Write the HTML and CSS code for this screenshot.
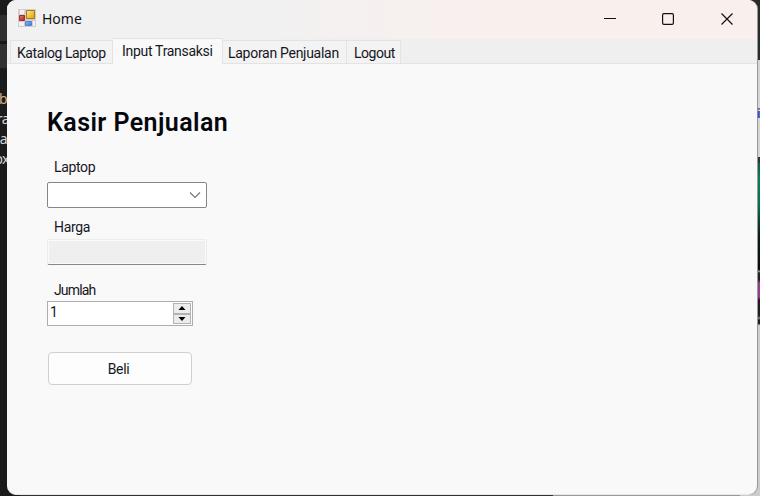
FILE: index.html
```
<!DOCTYPE html>
<html lang="id">
<head>
<meta charset="utf-8">
<title>Home</title>
<link rel="stylesheet" href="styles.css">
</head>
<body>
<div class="desktop">
  <div class="behind-left"><span>b</span><span>ra</span><span>a</span><span>ox</span></div>
  <main class="window">
    <header class="titlebar">
      <svg class="app-icon" width="18" height="18" viewBox="0 0 18 18">
        <defs>
          <linearGradient id="gold" x2="1" y2="1"><stop stop-color="#ffec8a"/><stop offset="1" stop-color="#dd9e00"/></linearGradient>
          <linearGradient id="red" x2="1" y2="1"><stop stop-color="#e98072"/><stop offset="1" stop-color="#ad1b18"/></linearGradient>
          <linearGradient id="blue" x2="1" y2="1"><stop stop-color="#8ab7ff"/><stop offset="1" stop-color="#3674dc"/></linearGradient>
        </defs>
        <path d="M0 0h18v18H0z" fill="#cfcfcf"/>
        <path d="M2 1h4v4H2zM1 13h5v4H1zM15 12h2v5h-2z" fill="#f1f1f1"/>
        <path d="M8.500 1.500h8v8h-8z" fill="url(#gold)" stroke="#a67c19"/>
        <path d="M1.500 6.500h5v5h-5z" fill="url(#red)" stroke="#a52d29"/>
        <path d="M7.500 12.500h6v4h-6z" fill="url(#blue)" stroke="#5583ca"/>
      </svg>
      <h1 class="title">Home</h1>
      <svg class="controls" width="131" height="14" viewBox="0 0 131 14" fill="none" stroke="#111" stroke-width="1.2">
        <path d="M0 6.500h12" stroke-width="1"/>
        <rect x="58.600" y="1.600" width="10.800" height="10.800" rx="1.300"/>
        <path d="M117.500 1.500l11 11M128.500 1.500l-11 11"/>
      </svg>
    </header>
    <nav class="tabs">
      <a class="tab katalog"><span>Katalog Laptop</span></a>
      <a class="tab active"><span>Input Transaksi</span></a>
      <a class="tab laporan"><span>Laporan Penjualan</span></a>
      <a class="tab logout"><span>Logout</span></a>
    </nav>
    <section class="page">
      <h2 class="heading">Kasir Penjualan</h2>
      <div class="label laptop">Laptop</div>
      <div class="combo">
        <svg width="12" height="8" viewBox="0 0 12 8" fill="none" stroke="#777" stroke-width="1.200"><path d="M1 1.500l5 5 5-5"/></svg>
      </div>
      <div class="label harga">Harga</div>
      <div class="readonly"></div>
      <div class="label jumlah">Jumlah</div>
      <div class="number">
        <span class="value">1</span>
        <div class="spinner">
          <div class="step"><svg width="8" height="4" viewBox="0 0 8 4"><path d="M4 0l3.500 4h-7z"/></svg></div>
          <div class="step"><svg width="8" height="4" viewBox="0 0 8 4"><path d="M4 4l3.500-4h-7z"/></svg></div>
        </div>
      </div>
      <button class="buy"><span>Beli</span></button>
    </section>
  </main>
  <div class="behind-right"><span>i</span></div>
</div>
</body>
</html>
```
FILE: styles.css
```
* { box-sizing: border-box; }
body { margin: 0; font-family: Roboto, "Liberation Sans", sans-serif; color: #16161f; }
.desktop {
  display: grid;
  grid-template-columns: 7px 750px 3px;
  width: 760px;
  height: 496px;
  overflow: hidden;
  background:
    linear-gradient(#1b1b1b 0 15px, #303030 15px 41px, #191919 41px 44px, #303030 44px 68px, #1b1b1b 68px) 0 0 / 20px 496px no-repeat,
    linear-gradient(#282b2b 0 60px, #d6d6d6 60px 157px, #333 157px 163px, #056346 163px, #078057 180px, #087050 205px, #0b1d18 235px, #0b0d0d 270px, #aaa 271px, #222 273px 280px, #953d91 283px 297px, #25172a 300px, #202124 316px, #888 318px, #222 320px 324px, #ccc 325px) 740px 0 / 20px 496px no-repeat,
    linear-gradient(90deg, #343033 553px, #999 553px);
}
.behind-left {
  display: flex;
  flex-direction: column;
  align-items: flex-end;
  padding-top: 89px;
  overflow: hidden;
  font: 14px/20px "Noto Sans", sans-serif;
  letter-spacing: -0.5px;
  color: #d5d5d5;
}
.behind-left span:nth-child(even) { margin-right: -2px; }
.behind-left span:first-child { color: #d9ad86; }
.behind-right { padding-top: 105px; overflow: hidden; font: bold 13px/17px Roboto, sans-serif; color: #3849b5; }
.window {
  height: 495px;
  border-radius: 9px;
  overflow: hidden;
  background: #f9f9f9;
  border-bottom: 1px solid #e7e7e7;
  box-shadow: 1px 0 0 #999;
}
.titlebar {
  display: flex;
  align-items: center;
  height: 39px;
  padding: 0 23px 1px 11px;
  background: linear-gradient(90deg, #f1f1f1 0 240px, #f9f0ee 480px);
}
.app-icon { margin-top: -2px; }
.title { margin: 0 auto 0 6px; font: 14px/20px "Noto Sans", sans-serif; color: #111; }
.controls { margin-right: -1px; }
.tabs {
  display: flex;
  align-items: flex-end;
  height: 25px;
  padding-left: 3px;
  background: linear-gradient(#e3e3e3, #e3e3e3) 0 24px / 100% 1px no-repeat, #efefef;
}
.tab {
  display: flex;
  align-items: center;
  height: 24px;
  padding-top: 2px;
  border: 1px solid #e3e3e3;
  border-left-width: 0;
  background: #f3f3f3;
  font-size: 14px;
  line-height: 20px;
  white-space: nowrap;
}
.katalog { width: 103px; padding-left: 6px; border-left-width: 1px; letter-spacing: -0.42px; }
.active { width: 110px; height: 26px; padding: 0 0 2px 9px; border-bottom: 0; background: #f9f9f9; letter-spacing: -0.3px; }
.laporan { width: 124px; padding-left: 5px; letter-spacing: -0.28px; }
.logout { width: 54px; padding-left: 7px; letter-spacing: -0.45px; }
.page { display: flex; flex-direction: column; align-items: flex-start; padding: 44px 0 0 40px; }
.heading { margin: 0; font-size: 25px; font-weight: 600; line-height: 30px; letter-spacing: 0.43px; color: #05070d; white-space: nowrap; }
.label { padding-left: 7px; font-size: 14px; line-height: 20px; letter-spacing: -0.35px; }
.laptop { margin-top: 19px; }
.combo {
  display: flex;
  align-items: center;
  justify-content: flex-end;
  width: 160px;
  height: 26px;
  margin-top: 5px;
  padding-right: 5px;
  border: 1px solid #868686;
  border-radius: 2px;
  background: #fff;
}
.harga { margin-top: 9px; }
.readonly {
  width: 160px;
  height: 26px;
  margin-top: 2px;
  border: 1px solid #ececec;
  border-bottom-color: #888;
  border-radius: 2px;
  background: #efefef;
  box-shadow: inset 0 0 0 1px #fafafa;
}
.jumlah { margin-top: 15px; letter-spacing: -0.85px; }
.number {
  display: flex;
  justify-content: space-between;
  width: 146px;
  height: 25px;
  margin-top: 1px;
  padding: 1px 1px 1px 2px;
  border: 1px solid #abadb3;
  background: #fff;
}
.value { font-size: 14px; line-height: 19px; }
.spinner { display: flex; flex-direction: column; width: 18px; height: 21px; }
.step { display: flex; flex: 1; align-items: center; justify-content: center; border: 1px solid #b3b3b3; background: #ececec; }
.buy {
  width: 144px;
  height: 33px;
  margin: 26px 0 0 1px;
  padding: 0 3px 0 0;
  border: 1px solid #d0d0d0;
  border-radius: 4px;
  background: #fdfdfd;
  color: #16161f;
  font: 14px/20px Roboto, sans-serif;
  letter-spacing: -0.35px;
}
```
